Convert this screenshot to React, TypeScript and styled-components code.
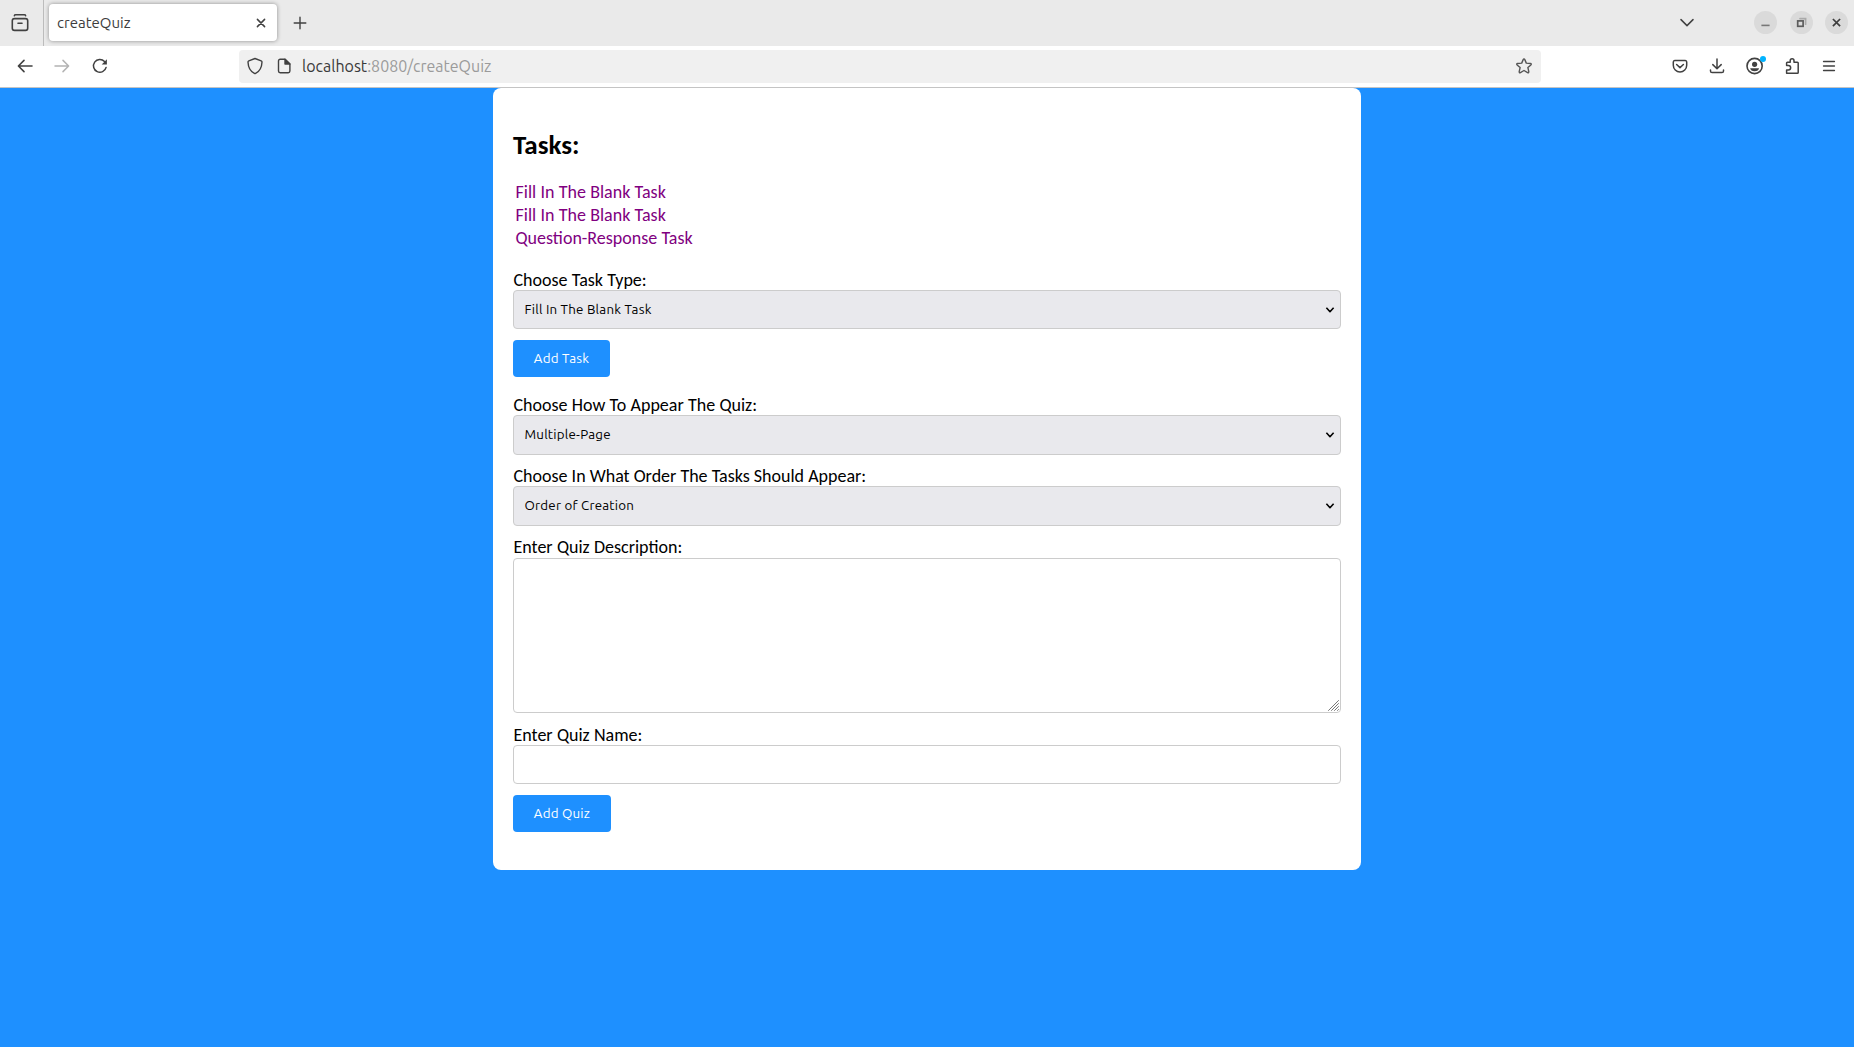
import React from "react";
import styled, { createGlobalStyle } from "styled-components";

const GlobalStyle = createGlobalStyle`
  * { box-sizing: border-box; }
  html, body { margin: 0; padding: 0; }
  body { background: #1e90ff; }
`;

const uiFont = `Ubuntu, "Noto Sans", sans-serif`;
const pageFont = `Carlito, Calibri, Lato, sans-serif`;

const Window = styled.div`
  display: flex;
  flex-direction: column;
  width: 100%;
  height: 1047px;
  overflow: hidden;
  font-family: ${pageFont};
  font-size: 18px;
  color: #000;
  background: #1e90ff;
`;

const TabStrip = styled.div`
  display: flex;
  flex: none;
  height: 46px;
  background: #eaeaea;
`;

const ViewCell = styled.div`
  display: flex;
  justify-content: center;
  width: 44px;
  padding: 13px 3px 0 0;
  border-right: 1px solid #bcbcbc;
`;

const Tab = styled.div`
  display: flex;
  align-items: center;
  justify-content: space-between;
  width: 228px;
  height: 37px;
  margin: 4px 0 0 5px;
  padding: 0 8.5px 0 8px;
  border-radius: 4px;
  background: #fff;
  box-shadow: 0 0 4px rgba(0, 0, 0, 0.4);
  color: #3d3d3d;
  font: 400 15px/20px ${uiFont};
`;

const StripButton = styled.div`
  display: flex;
  align-items: center;
  justify-content: center;
  width: 37px;
  height: 46px;
  margin-left: 4px;
`;

const WindowControls = styled.div`
  display: flex;
  align-items: center;
  margin-left: auto;
  height: 45px;
  padding-right: 6px;
`;

const ListTabs = styled.div`
  display: flex;
  margin-right: 60.5px;
`;

const RoundButton = styled.div<{ $gap?: number }>`
  display: flex;
  width: 23px;
  height: 23px;
  margin-left: ${(p) => p.$gap ?? 0}px;
  border-radius: 50%;
  background: #dadada;
`;

const Toolbar = styled.div`
  display: flex;
  flex: none;
  align-items: center;
  height: 42px;
  padding: 0 6px 1px;
  background: #fff;
  border-bottom: 1px solid #c4c4c4;
`;

const ToolButton = styled.div<{ $nudge?: number }>`
  display: flex;
  align-items: center;
  justify-content: center;
  width: 37.2px;
  height: 36px;
  padding-left: ${(p) => Math.max(0, p.$nudge ?? 0)}px;
  padding-right: ${(p) => Math.max(0, -(p.$nudge ?? 0))}px;
`;

const AddressBar = styled.div`
  display: flex;
  align-items: center;
  width: 1302px;
  height: 33px;
  margin: 0 auto 0 121px;
  padding: 0 8px 0 7.5px;
  border-radius: 4px;
  background: #f0f0f0;
`;

const Address = styled.div`
  flex: 1;
  color: #9b9b9b;
  font: 400 16px/24px ${uiFont};
`;

const Host = styled.span`
  color: #3a3a3a;
`;

const IdentityIcon = styled.div<{ $gap: number }>`
  display: flex;
  margin-right: ${(p) => p.$gap}px;
`;

const Card = styled.main`
  align-self: center;
  width: 868px;
  height: 782px;
  padding: 20px;
  border-radius: 8px;
  background: #fff;
`;

const Heading = styled.h2`
  margin: 20px 0;
  font: 700 27px/33px ${pageFont};
`;

const TaskList = styled.ul`
  display: flex;
  flex-direction: column;
  margin: 0 0 18px;
  padding: 0 2.5px;
  list-style: none;
`;

const TaskItem = styled.li`
  height: 23px;
  line-height: 23px;
  word-spacing: 0.2px;
  color: purple;
`;

const Field = styled.div<{ $height: number; $gap: number }>`
  display: flex;
  flex-direction: column;
  height: ${(p) => p.$height}px;
  margin-bottom: ${(p) => p.$gap}px;
`;

const Label = styled.label<{ $height?: number; $wordGap?: number }>`
  height: ${(p) => p.$height ?? 22}px;
  padding-left: 0.5px;
  line-height: 24px;
  word-spacing: ${(p) => p.$wordGap ?? 0.2}px;
`;

const SelectBox = styled.div`
  display: flex;
  flex: 1;
  align-items: center;
  justify-content: space-between;
  padding: 0 5px 0 10.5px;
  border: 1px solid #ccc;
  border-radius: 4px;
  background: #e9e9ed;
  font: 400 13.33px/18px ${uiFont};
  letter-spacing: 0.22px;
`;

const Input = styled.input`
  flex: 1;
  min-height: 0;
  border: 1px solid #ccc;
  border-radius: 4px;
  background: #fff;
`;

const TextArea = styled.div`
  display: flex;
  flex: 1;
  align-items: flex-end;
  justify-content: flex-end;
  padding: 1px;
  border: 1px solid #ccc;
  border-radius: 4px;
  background: #fff;
`;

const Submit = styled.button<{ $width: number; $gap?: number }>`
  display: block;
  width: ${(p) => p.$width}px;
  height: 37px;
  margin: 0 0 ${(p) => p.$gap ?? 0}px;
  padding: 1px 0 0;
  border: 0;
  border-radius: 4px;
  background: #1e90ff;
  color: #fff;
  font: 400 13.33px/18px ${uiFont};
  letter-spacing: 0.22px;
`;

const ink = "#414141";

const Glyph = ({ w, h = w, color = ink, sw = 1.4, children }: { w: number; h?: number; color?: string; sw?: number; children: React.ReactNode }) => (
  <svg width={w} height={h} viewBox={`0 0 ${w} ${h}`} fill="none" stroke={color} strokeWidth={sw} strokeLinecap="round" strokeLinejoin="round">
    {children}
  </svg>
);

const Chevron = () => (
  <Glyph w={10} h={8} color="#000" sw={1.6}>
    <path d="M1.4 1.8 5 5.7 8.6 1.8" strokeLinecap="butt" />
  </Glyph>
);

const SelectField = ({ label, value, height = 61, gap, wordGap }: { label: string; value: string; height?: number; gap: number; wordGap?: number }) => (
  <Field $height={height} $gap={gap}>
    <Label $wordGap={wordGap}>{label}</Label>
    <SelectBox>
      {value}
      <Chevron />
    </SelectBox>
  </Field>
);

const tasks = ["Fill In The Blank Task", "Fill In The Blank Task", "Question-Response Task"];

export default function App() {
  return (
    <Window>
      <GlobalStyle />
      <TabStrip>
        <ViewCell>
          <Glyph w={18} h={19} sw={1.6}>
            <path d="M3.4 2.6Q3.6 1.8 4.6 1.8H13.4Q14.4 1.8 14.6 2.6" />
            <rect x="1.3" y="5.6" width="15.4" height="11.8" rx="2.2" />
            <path d="M7 10.3h4" />
          </Glyph>
        </ViewCell>
        <Tab>
          createQuiz
          <Glyph w={16} sw={1.5}>
            <path d="M4.4 4.4 11.6 11.6M11.6 4.4 4.4 11.6" />
          </Glyph>
        </Tab>
        <StripButton>
          <Glyph w={14}>
            <path d="M7 1.2v11.6M1.2 7h11.6" />
          </Glyph>
        </StripButton>
        <WindowControls>
          <ListTabs>
            <Glyph w={14} h={10} sw={1.5}>
              <path d="M1 1.6 7 7.6 13 1.6" />
            </Glyph>
          </ListTabs>
          <RoundButton>
            <Glyph w={23} color="#777" sw={1.6}>
              <path d="M7.4 14.4h8.2" strokeLinecap="butt" />
            </Glyph>
          </RoundButton>
          <RoundButton $gap={13}>
            <Glyph w={23} color="#5c5c5c" sw={1.7}>
              <path d="M10 7.6h5.6v5.6" stroke="#aaa" strokeLinejoin="miter" />
              <rect x="7.7" y="9.9" width="5.4" height="5.4" strokeLinejoin="miter" />
            </Glyph>
          </RoundButton>
          <RoundButton $gap={12}>
            <Glyph w={23} color="#3d3d3d" sw={1.7}>
              <path d="m7.9 8 7.2 7.2m0-7.2-7.2 7.2" strokeLinecap="butt" />
            </Glyph>
          </RoundButton>
        </WindowControls>
      </TabStrip>
      <Toolbar>
        <ToolButton>
          <Glyph w={16} sw={1.6}>
            <path d="M15 8H1.6M7 2.4 1.4 8 7 13.6" />
          </Glyph>
        </ToolButton>
        <ToolButton>
          <Glyph w={16} color="#b3b3b3" sw={1.5}>
            <path d="M1 8H14.4M9 2.4 14.6 8 9 13.6" />
          </Glyph>
        </ToolButton>
        <ToolButton $nudge={1.6}>
          <Glyph w={16} sw={1.5}>
            <path d="M14.1 9.4A6.4 6.4 0 1 1 12.5 3.4" />
            <path d="M14.9 1.2V6.4H9.7z" fill={ink} stroke="none" />
          </Glyph>
        </ToolButton>
        <AddressBar>
          <IdentityIcon $gap={11}>
            <Glyph w={18}>
              <path d="M9 1.5 15.2 3.9Q16 4.2 16 5C15.8 10.4 14 14.2 9.6 16.4Q9 16.7 8.4 16.4C4 14.2 2.2 10.4 2 5Q2 4.2 2.8 3.9z" />
            </Glyph>
          </IdentityIcon>
          <IdentityIcon $gap={9}>
            <Glyph w={18}>
              <path d="M10 2.2H5.2A1.7 1.7 0 0 0 3.5 3.9V14.1A1.7 1.7 0 0 0 5.2 15.8H13.2A1.7 1.7 0 0 0 14.9 14.1V7z" />
              <path d="M10 2.2V7H14.9z" fill={ink} />
            </Glyph>
          </IdentityIcon>
          <Address>
            <Host>localhost</Host>:8080/createQuiz
          </Address>
          <Glyph w={18} color="#555">
            <path d="M9 1.9Q9.5 1.9 9.8 2.6L11.3 6.1 15.4 6.5Q16.8 6.8 15.9 7.9L12.9 10.6 13.8 14.6Q13.9 16.1 12.6 15.6L9 13.5 5.4 15.6Q4.1 16.1 4.2 14.6L5.1 10.6 2.1 7.9Q1.2 6.8 2.6 6.5L6.7 6.1 8.2 2.6Q8.5 1.9 9 1.9z" />
          </Glyph>
        </AddressBar>
        <ToolButton $nudge={-2}>
          <Glyph w={16} sw={1.5}>
            <path d="M2.7 2.4H13.3A1.5 1.5 0 0 1 14.7 3.9V7.2A6.7 6.7 0 0 1 1.3 7.2V3.9A1.5 1.5 0 0 1 2.7 2.4z" />
            <path d="M4.6 6.5 8 9.6 11.4 6.5" />
          </Glyph>
        </ToolButton>
        <ToolButton $nudge={-1.6}>
          <Glyph w={16} sw={1.5}>
            <path d="M8 1V10.6M3.8 6.6 8 10.8 12.2 6.6M1.5 12V13Q1.5 14.6 3.1 14.6H12.9Q14.5 14.6 14.5 13V12" />
          </Glyph>
        </ToolButton>
        <ToolButton>
          <Glyph w={22} h={22} sw={1.6}>
            <circle cx="10.6" cy="11" r="7.6" />
            <circle cx="10.6" cy="9.3" r="2.6" fill={ink} stroke="none" />
            <path d="M6.2 13.3H15Q14.6 16.3 10.6 16.3T6.2 13.3z" fill={ink} stroke="none" />
            <circle cx="19" cy="4" r="3" fill="#00b3ff" stroke="none" />
          </Glyph>
        </ToolButton>
        <ToolButton>
          <Glyph w={18} sw={1.5}>
            <path d="M3.6 16.2V13H5.4A2.2 2.2 0 0 0 5.4 8.5H3.6V6Q3.6 5.2 4.4 5.2H7.2V3.7A1.9 1.9 0 0 1 11 3.7V5.2H14.4Q15.2 5.2 15.2 6V15.4Q15.2 16.2 14.4 16.2z" />
          </Glyph>
        </ToolButton>
        <ToolButton>
          <Glyph w={14} sw={1.3}>
            <path d="M1.5 2.5h11M1.5 7h11M1.5 11.5h11" />
          </Glyph>
        </ToolButton>
      </Toolbar>
      <Card>
        <Heading>Tasks:</Heading>
        <TaskList>
          {tasks.map((t, i) => (
            <TaskItem key={i}>{t}</TaskItem>
          ))}
        </TaskList>
        <SelectField label="Choose Task Type:" value="Fill In The Blank Task" gap={11} />
        <Submit $width={97} $gap={16}>Add Task</Submit>
        <SelectField label="Choose How To Appear The Quiz:" value="Multiple-Page" height={62} gap={9} />
        <SelectField label="Choose In What Order The Tasks Should Appear:" value="Order of Creation" height={62} gap={9} wordGap={0} />
        <Field $height={178} $gap={10}>
          <Label $height={23}>Enter Quiz Description:</Label>
          <TextArea>
            <Glyph w={11} color="#777" sw={1}>
              <path d="M.5 10.5l10-10M3.5 10.5l7-7M6.5 10.5l4-4M9.5 10.5l1-1" />
            </Glyph>
          </TextArea>
        </Field>
        <Field $height={61} $gap={11}>
          <Label>Enter Quiz Name:</Label>
          <Input />
        </Field>
        <Submit $width={98}>Add Quiz</Submit>
      </Card>
    </Window>
  );
}
